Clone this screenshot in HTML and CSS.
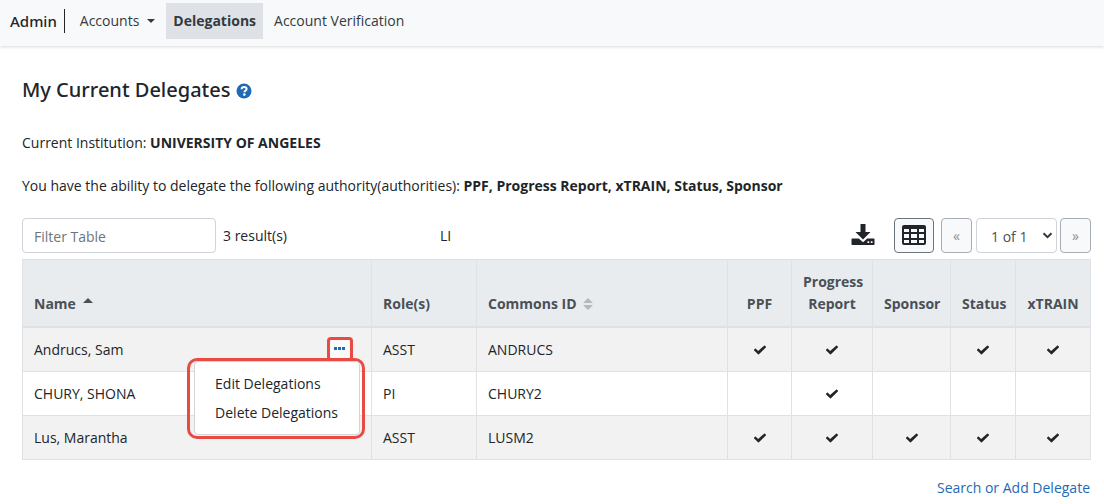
FILE: index.html
```
<!DOCTYPE html>
<html lang="en">
<head>
    <meta charset="UTF-8">
    <meta name="viewport" content="width=device-width, initial-scale=1.0">
    <title>My Current Delegates</title>
    <link rel="stylesheet" href="styles.css">
</head>
<body>
    <!-- shared icon shapes -->
    <svg class="sprite" aria-hidden="true">
        <symbol id="check" viewBox="0 0 512 512">
            <path d="M174 439L7 273c-10-10-10-26 0-36l37-36c10-10 26-10 36 0l94 94L432 73c10-10 26-10 36 0l37 36c10 10 10 26 0 36L210 439c-10 10-26 10-36 0z"/>
        </symbol>
    </svg>

    <nav class="navbar">
        <a class="brand" href="#">Admin</a>
        <button class="nav-link nav-toggle" type="button">Accounts</button>
        <a class="nav-link active" href="#">Delegations</a>
        <a class="nav-link" href="#">Account Verification</a>
    </nav>

    <main class="content">
        <h1 class="title">My Current Delegates
            <svg class="help-icon" viewBox="0 0 16 16" role="img" aria-label="Help">
                <circle cx="8" cy="8" r="7.5" fill="#1f6ab5"/>
                <path d="M5.6 6.2C5.7 4.7 6.7 3.9 8.1 3.9c1.400 0 2.500.8 2.500 2.100 0 1.700-2.200 1.700-2.200 3.200" fill="none" stroke="#fff" stroke-width="2"/>
                <circle cx="8.300" cy="11.600" r="1.300" fill="#fff"/>
            </svg>
        </h1>
        <p class="info">Current Institution: <b>UNIVERSITY OF ANGELES</b></p>
        <p class="info">You have the ability to delegate the following authority(authorities): <b>PPF, Progress Report, xTRAIN, Status, Sponsor</b></p>

        <div class="toolbar">
            <div class="toolbar-left">
                <input class="filter" type="text" placeholder="Filter Table" aria-label="Filter Table">
                <span>3 result(s)</span>
            </div>
            <span class="toolbar-mid">LI</span>
            <div class="toolbar-right">
                <button class="download" type="button" aria-label="Download">
                    <svg viewBox="0 0 24 24" width="24" height="24">
                        <path d="M9.500 0h5v8h5L12 15.500 4.500 8h5z"/>
                        <path d="M1.500 14.500h6.300L12 18.300l4.200-3.800h6.300c.6 0 1 .4 1 1V20c0 .6-.4 1-1 1h-21c-.6 0-1-.4-1-1v-4.500c0-.6.4-1 1-1z"/>
                        <path d="M16.500 17.300h1.700V19h-1.700zM19.800 17.300h1.700V19h-1.700z" fill="#fff"/>
                    </svg>
                </button>
                <button class="btn btn-columns" type="button" aria-label="Columns">
                    <svg viewBox="0 0 24 22" width="24" height="22">
                        <rect x="0" y="0" width="24" height="20" rx="2"/>
                        <path d="M2 4h5v3H2zM9 4h6v3H9zM17 4h5v3h-5zM2 9h5v4H2zM9 9h6v4H9zM17 9h5v4h-5zM2 15h5v3H2zM9 15h6v3H9zM17 15h5v3h-5z" fill="#f8f9fa"/>
                    </svg>
                </button>
                <button class="btn btn-page" type="button" disabled>«</button>
                <div class="page-picker">
                    <select class="page-select" aria-label="Page">
                        <option>1 of 1</option>
                    </select>
                    <svg class="chevron" viewBox="0 0 10 7" aria-hidden="true">
                        <path d="M1 1.200l4 4 4-4" fill="none" stroke="#343a40" stroke-width="2"/>
                    </svg>
                </div>
                <button class="btn btn-page" type="button" disabled>»</button>
            </div>
        </div>

        <table class="delegates">
            <colgroup>
                <col>
                <col class="col-role">
                <col class="col-id">
                <col class="col-ppf">
                <col class="col-progress">
                <col class="col-sponsor">
                <col class="col-status">
                <col class="col-xtrain">
            </colgroup>
            <thead>
                <tr>
                    <th>Name
                        <svg class="sort" viewBox="0 0 10 12"><path d="M0 5l5-5 5 5z" fill="#495057"/></svg>
                    </th>
                    <th>Role(s)</th>
                    <th>Commons ID
                        <svg class="sort" viewBox="0 0 10 12"><path d="M0 5l5-5 5 5zM0 7h10l-5 5z" fill="#b5b9bd"/></svg>
                    </th>
                    <th class="mark">PPF</th>
                    <th class="mark">Progress Report</th>
                    <th class="mark">Sponsor</th>
                    <th class="mark">Status</th>
                    <th class="mark">xTRAIN</th>
                </tr>
            </thead>
            <tbody>
                <tr>
                    <td>
                        <div class="name-cell">
                            <span>Andrucs, Sam</span>
                            <div class="dropdown">
                                <button class="more" type="button" aria-label="Actions">
                                    <svg viewBox="0 0 12 4" width="12" height="4"><path d="M0 0h3v3H0zM4 0h3v3H4zM8 0h3v3H8z" fill="#1f6ab5"/></svg>
                                </button>
                                <div class="menu-frame">
                                    <div class="menu">
                                        <a class="menu-item" href="#">Edit Delegations</a>
                                        <a class="menu-item" href="#">Delete Delegations</a>
                                    </div>
                                </div>
                            </div>
                        </div>
                    </td>
                    <td>ASST</td>
                    <td>ANDRUCS</td>
                    <td class="mark"><svg class="check"><use href="#check"/></svg></td>
                    <td class="mark"><svg class="check"><use href="#check"/></svg></td>
                    <td class="mark"></td>
                    <td class="mark"><svg class="check"><use href="#check"/></svg></td>
                    <td class="mark"><svg class="check"><use href="#check"/></svg></td>
                </tr>
                <tr>
                    <td>CHURY, SHONA</td>
                    <td>PI</td>
                    <td>CHURY2</td>
                    <td class="mark"></td>
                    <td class="mark"><svg class="check"><use href="#check"/></svg></td>
                    <td class="mark"></td>
                    <td class="mark"></td>
                    <td class="mark"></td>
                </tr>
                <tr>
                    <td>Lus, Marantha</td>
                    <td>ASST</td>
                    <td>LUSM2</td>
                    <td class="mark"><svg class="check"><use href="#check"/></svg></td>
                    <td class="mark"><svg class="check"><use href="#check"/></svg></td>
                    <td class="mark"><svg class="check"><use href="#check"/></svg></td>
                    <td class="mark"><svg class="check"><use href="#check"/></svg></td>
                    <td class="mark"><svg class="check"><use href="#check"/></svg></td>
                </tr>
            </tbody>
        </table>

        <div class="footer">
            <a href="#">Search or Add Delegate</a>
        </div>
    </main>
</body>
</html>
```
FILE: styles.css
```
* {
    box-sizing: border-box;
}
body {
    margin: 0;
    background: #fff;
    color: #212529;
    font-family: "Open Sans", "Noto Sans", sans-serif;
    font-size: 14px;
    line-height: 21px;
}
button, input, select {
    font: inherit;
    color: inherit;
}
a {
    color: #1f6ab5;
    text-decoration: none;
}
.sprite {
    display: none;
}

/* top bar */
.navbar {
    display: flex;
    align-items: center;
    height: 46px;
    padding: 0 10px 4px;
    background: #f8f9fa;
    box-shadow: 0 1px 3px rgba(0, 0, 0, 0.15);
}
.brand {
    margin-right: 8px;
    padding-right: 7px;
    border-right: 1px solid #212529;
    color: #212529;
    font-family: "Noto Sans", sans-serif;
    font-size: 15px;
    font-weight: 500;
    line-height: 24px;
}
.nav-link {
    padding: 8px 7px;
    margin-right: 4px;
    border: 0;
    background: none;
    color: #343a40;
    line-height: 20px;
    white-space: nowrap;
}
.nav-link.active {
    background: #dee2e6;
    font-weight: bold;
}
.nav-toggle::after {
    content: "";
    display: inline-block;
    margin-left: 8px;
    vertical-align: 3px;
    border-top: 4px solid;
    border-left: 4px solid transparent;
    border-right: 4px solid transparent;
}

.content {
    padding: 28px 13px 0 22px;
}
.title {
    margin: 0 0 26px;
    font-family: "Noto Sans", sans-serif;
    font-size: 20px;
    font-weight: 500;
    line-height: 32px;
}
.help-icon {
    width: 16px;
    height: 16px;
    vertical-align: -2px;
}
.info {
    margin: 0 0 22px;
}

/* toolbar above the table */
.toolbar {
    display: flex;
    align-items: center;
    height: 35px;
    margin-bottom: 6px;
}
.toolbar-left {
    display: flex;
    align-items: center;
    gap: 7px;
    width: 418px;
}
.filter {
    width: 194px;
    height: 35px;
    padding: 2px 11px 0;
    border: 1px solid #ced4da;
    border-radius: 4px;
}
.filter::placeholder {
    color: #6c757d;
}
.toolbar-right {
    display: flex;
    align-items: center;
    margin-left: auto;
}
.download {
    display: flex;
    margin-right: 19px;
    padding: 0;
    border: 0;
    background: none;
    fill: #212529;
}
.btn {
    display: flex;
    align-items: center;
    justify-content: center;
    height: 35px;
    padding: 0;
    border: 1px solid #a7adb3;
    border-radius: 4px;
    background: #f8f9fa;
}
.btn-columns {
    width: 40px;
    margin-right: 7px;
    border-color: #6c757d;
    fill: #212529;
}
.btn-page {
    width: 31px;
    color: #8b9197;
}
.page-picker {
    position: relative;
    margin: 0 3px 0 4px;
}
.page-select {
    display: block;
    width: 81px;
    height: 35px;
    padding: 2px 14px 0;
    border: 1px solid #ced4da;
    border-radius: 4px;
    background: #fff;
    color: #495057;
    appearance: none;
}
.chevron {
    position: absolute;
    top: 14px;
    right: 4px;
    width: 11px;
    height: 7px;
    pointer-events: none;
}

/* delegates table */
.delegates {
    width: 100%;
    table-layout: fixed;
    border-collapse: collapse;
}
.col-role { width: 105px; }
.col-id { width: 251px; }
.col-ppf { width: 64px; }
.col-progress { width: 81px; }
.col-sponsor { width: 78px; }
.col-status { width: 65px; }
.col-xtrain { width: 75px; }
.delegates th,
.delegates td {
    padding: 11px;
    border: 1px solid #dee2e6;
    text-align: left;
}
.delegates th {
    border-bottom-width: 2px;
    background: #e9ecef;
    color: #495057;
    line-height: 22px;
    vertical-align: bottom;
}
.delegates .mark {
    text-align: center;
}
.delegates tbody tr:nth-child(odd) {
    background: #f2f2f2;
}
.sort {
    width: 10px;
    height: 12px;
    margin-left: 3px;
    vertical-align: -1px;
}
.check {
    width: 12px;
    height: 12px;
    vertical-align: -1px;
    fill: #212529;
}

/* row menu */
.name-cell {
    display: flex;
    justify-content: space-between;
}
.dropdown {
    position: relative;
    height: 21px;
    margin-right: 7px;
}
.more {
    display: flex;
    align-items: center;
    justify-content: center;
    width: 26px;
    height: 24px;
    margin-top: -2px;
    padding: 0;
    border: 3px solid #e94b43;
    border-radius: 4px;
    background: #fafafa;
}
.menu-frame {
    position: absolute;
    top: 19px;
    right: -12px;
    padding: 0 2px 1px 4px;
    border: 3px solid #e94b43;
    border-radius: 10px;
}
.menu {
    padding: 7px 0;
    border: 1px solid #d5d5d5;
    border-radius: 4px;
    background: #fff;
}
.menu-item {
    display: block;
    padding: 4px 21px 4px 20px;
    color: #212529;
    white-space: nowrap;
}

.footer {
    margin-top: 17px;
    padding-right: 1px;
    text-align: right;
}
```
